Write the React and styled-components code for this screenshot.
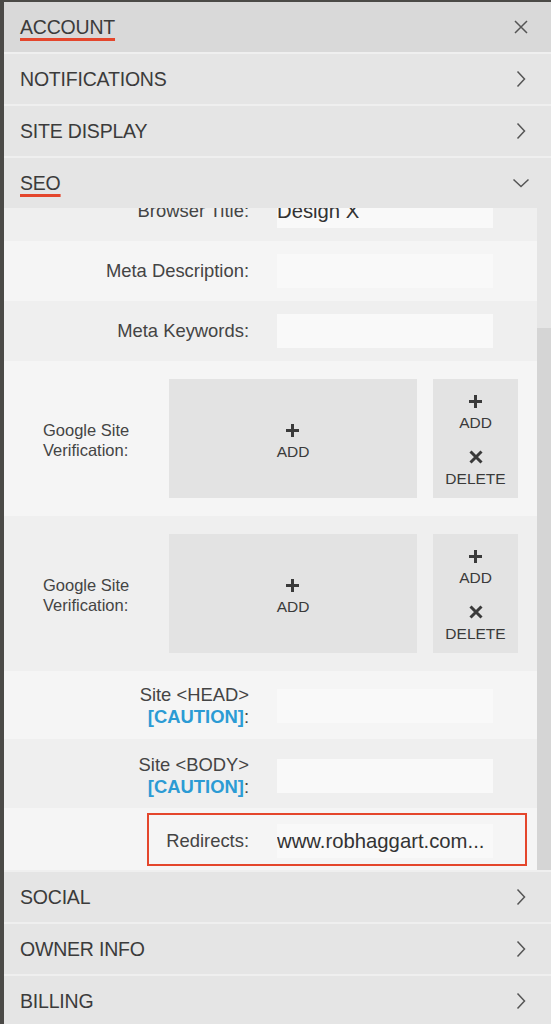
import React from 'react';
import styled, { createGlobalStyle } from 'styled-components';

// Ajustes de cuenta: acordeón con la sección SEO abierta
const GlobalStyle = createGlobalStyle`
  html, body {
    margin: 0;
    padding: 0;
    background: #4b4a47;
    overflow: hidden;
  }
  * {
    box-sizing: border-box;
  }
`;

const Page = styled.div`
  height: 1024px;
  padding: 2px 0 0 4px;
  display: flex;
  flex-direction: column;
  overflow: hidden;
  font-family: "Liberation Sans", Arial, sans-serif;
`;

const SectionHeader = styled.div`
  flex: none;
  height: ${p => (p.$first ? '50px' : '52px')};
  border-top: ${p => (p.$first ? 'none' : '2px solid #efefef')};
  background: ${p => (p.$active ? '#d9d9d9' : '#e5e5e5')};
  display: flex;
  align-items: center;
  justify-content: space-between;
  padding: 0 20px 0 16px;
  color: #3b3b3b;
`;

const HeaderTitle = styled.span`
  font-size: 19.5px;
  letter-spacing: -0.2px;
  text-decoration: ${p => (p.$underline ? 'underline' : 'none')};
  text-decoration-color: #e4462c;
  text-decoration-thickness: 3px;
  text-underline-offset: 4px;
`;

const IconBox = styled.span`
  display: flex;
  width: 20px;
  justify-content: center;
  color: #555;
`;

const ScrollArea = styled.div`
  flex: none;
  height: 662px;
  display: flex;
  overflow: hidden;
`;

const ScrollContent = styled.div`
  flex: 1;
  overflow: hidden;
`;

const ContentInner = styled.div`
  margin-top: -27px;
`;

const ScrollTrack = styled.div`
  width: 14px;
  flex: none;
  background: #e5e5e5;
  padding-top: 120px;
  display: flex;
`;

const ScrollThumb = styled.div`
  flex: 1;
  background: #d5d5d5;
`;

const FieldRow = styled.div`
  display: grid;
  grid-template-columns: 245px 216px;
  column-gap: 28px;
  align-items: center;
  padding: ${p => p.$pad || '13px 0'};
  background: ${p => (p.$alt ? '#efefef' : '#f5f5f5')};
`;

const Label = styled.div`
  text-align: right;
  font-size: 18.4px;
  line-height: 22px;
  color: #444;
`;

const Caution = styled.span`
  color: #2b9bd4;
  font-weight: bold;
`;

const TextInput = styled.div`
  height: 34px;
  background: #f9f9f9;
  font-size: 20.3px;
  line-height: 34px;
  color: #333;
  white-space: nowrap;
  overflow: hidden;
`;

const GoogleRow = styled.div`
  display: flex;
  align-items: center;
  padding: 18px 0 18px 39px;
  background: ${p => (p.$alt ? '#efefef' : '#f5f5f5')};
`;

const GoogleLabel = styled.div`
  width: 126px;
  padding-top: 2px;
  font-size: 16.5px;
  line-height: 20px;
  color: #444;
`;

const UploadBox = styled.div`
  width: ${p => p.$width}px;
  height: 119px;
  margin-left: ${p => p.$gap || 0}px;
  padding-top: ${p => p.$shift || 0}px;
  background: #e3e3e3;
  display: flex;
  flex-direction: column;
  align-items: center;
  justify-content: center;
  gap: ${p => p.$spacing || 0}px;
`;

const ActionButton = styled.div`
  display: flex;
  flex-direction: column;
  align-items: center;
  gap: 6px;
  font-size: 15.5px;
  line-height: 18px;
  color: #3a3a3a;
`;

const HighlightRow = styled.div`
  padding: 5px 0 4px 143px;
  background: #f5f5f5;
`;

const Highlight = styled.div`
  width: 380px;
  height: 53px;
  padding-top: 3px;
  border: 2px solid #e4462c;
  display: grid;
  grid-template-columns: 100px 216px;
  column-gap: 28px;
  align-items: center;
`;

const Close = () => (
  <svg width="16" height="16" viewBox="0 0 16 16" fill="none" stroke="currentColor" strokeWidth="1.5">
    <path d="M2 2 L14 14 M14 2 L2 14" />
  </svg>
);

const ChevronRight = () => (
  <svg width="10" height="18" viewBox="0 0 10 18" fill="none" stroke="currentColor" strokeWidth="1.5">
    <path d="M1.5 1.5 L8.5 9 L1.5 16.5" />
  </svg>
);

const ChevronDown = () => (
  <svg width="18" height="10" viewBox="0 0 18 10" fill="none" stroke="currentColor" strokeWidth="1.5">
    <path d="M1.5 1.5 L9 8.5 L16.5 1.5" />
  </svg>
);

const Plus = () => (
  <svg width="13" height="13" viewBox="0 0 13 13" stroke="#3a3a3a" strokeWidth="3">
    <path d="M6.5 0 V13 M0 6.5 H13" />
  </svg>
);

const Cross = () => (
  <svg width="14" height="14" viewBox="0 0 14 14" stroke="#3a3a3a" strokeWidth="3">
    <path d="M1.5 1.5 L12.5 12.5 M12.5 1.5 L1.5 12.5" />
  </svg>
);

const topSections = [
  { title: 'ACCOUNT', icon: <Close />, active: true, underline: true },
  { title: 'NOTIFICATIONS', icon: <ChevronRight /> },
  { title: 'SITE DISPLAY', icon: <ChevronRight /> },
  { title: 'SEO', icon: <ChevronDown />, underline: true },
];

const bottomSections = ['SOCIAL', 'OWNER INFO', 'BILLING'];

const GoogleVerification = ({ alt }) => (
  <GoogleRow $alt={alt}>
    <GoogleLabel>Google Site<br />Verification:</GoogleLabel>
    <UploadBox $width={248} $shift={8}>
      <ActionButton><Plus />ADD</ActionButton>
    </UploadBox>
    <UploadBox $width={85} $gap={16} $spacing={18} $shift={6}>
      <ActionButton><Plus />ADD</ActionButton>
      <ActionButton><Cross />DELETE</ActionButton>
    </UploadBox>
  </GoogleRow>
);

const App = () => (
  <>
    <GlobalStyle />
    <Page>
      {topSections.map((s, i) => (
        <SectionHeader key={s.title} $first={i === 0} $active={s.active}>
          <HeaderTitle $underline={s.underline}>{s.title}</HeaderTitle>
          <IconBox>{s.icon}</IconBox>
        </SectionHeader>
      ))}

      <ScrollArea>
        <ScrollContent>
          <ContentInner>
            <FieldRow $alt>
              <Label>Browser Title:</Label>
              <TextInput>Design X</TextInput>
            </FieldRow>
            <FieldRow>
              <Label>Meta Description:</Label>
              <TextInput />
            </FieldRow>
            <FieldRow $alt>
              <Label>Meta Keywords:</Label>
              <TextInput />
            </FieldRow>
            <GoogleVerification />
            <GoogleVerification alt />
            <FieldRow $pad="13px 0 11px">
              <Label>Site &lt;HEAD&gt;<br /><Caution>[CAUTION]</Caution>:</Label>
              <TextInput />
            </FieldRow>
            <FieldRow $alt $pad="15px 0 10px">
              <Label>Site &lt;BODY&gt;<br /><Caution>[CAUTION]</Caution>:</Label>
              <TextInput />
            </FieldRow>
            <HighlightRow>
              <Highlight>
                <Label>Redirects:</Label>
                <TextInput>www.robhaggart.com...</TextInput>
              </Highlight>
            </HighlightRow>
          </ContentInner>
        </ScrollContent>
        <ScrollTrack>
          <ScrollThumb />
        </ScrollTrack>
      </ScrollArea>

      {bottomSections.map(title => (
        <SectionHeader key={title}>
          <HeaderTitle>{title}</HeaderTitle>
          <IconBox><ChevronRight /></IconBox>
        </SectionHeader>
      ))}
    </Page>
  </>
);

export default App;
